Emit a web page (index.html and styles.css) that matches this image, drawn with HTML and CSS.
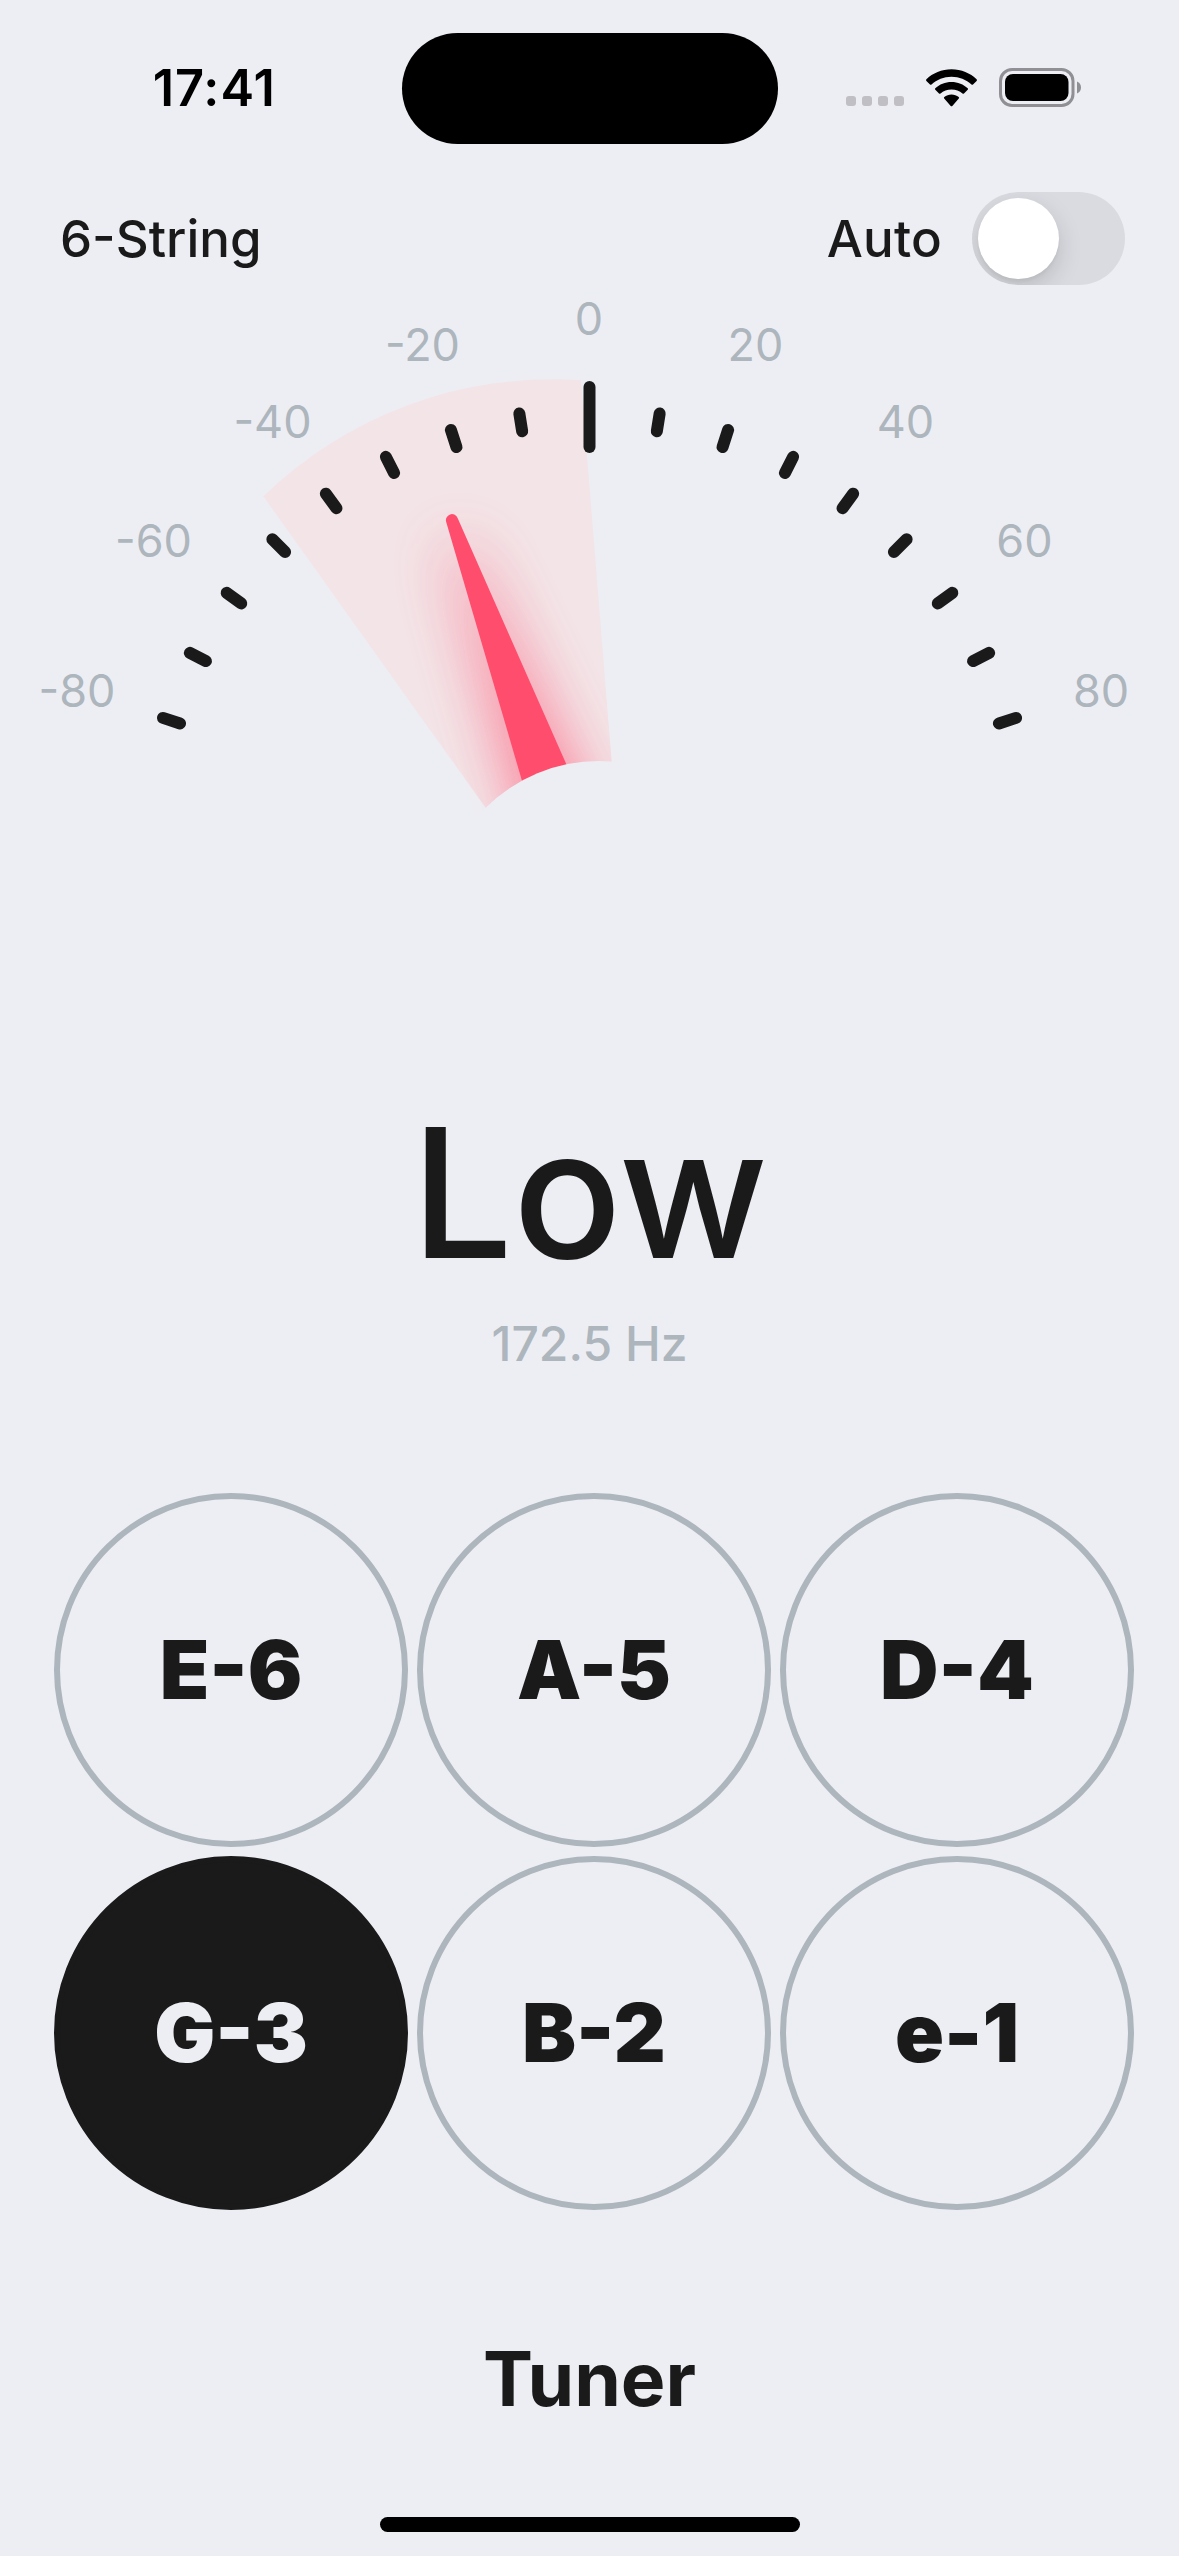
FILE: index.html
```html
<!DOCTYPE html>
<html lang="en">
<head>
<meta charset="utf-8">
<title>Tuner</title>
<link rel="stylesheet" href="styles.css">
</head>
<body>
<div class="screen">
  <header class="status">
    <div class="time">17:41</div>
    <div class="island"></div>
    <div class="indicators">
      <div class="signal"><i></i><i></i><i></i><i></i></div>
      <svg class="wifi" viewBox="0 0 51 38" width="51" height="38">
        <path d="M25.5 0.2C35.3 0.2 44.3 4 50.6 10.3Q51.3 11.1 50.6 11.9L47 15.5Q46.3 16.2 45.5 15.5C40.2 10.7 33.2 7.8 25.5 7.8S10.8 10.7 5.5 15.5Q4.7 16.2 4 15.5L.4 11.9Q-.3 11.1 .4 10.3C6.7 4 15.7 .2 25.5 .2Z"/>
        <path d="M25.5 12.9C31.8 12.9 37.5 15.3 41.7 19.2Q42.4 20 41.7 20.7L38 24.4Q37.3 25.1 36.5 24.4C33.6 21.9 29.7 20.4 25.5 20.4S17.4 21.9 14.5 24.4Q13.7 25.1 13 24.4L9.3 20.7Q8.6 20 9.3 19.2C13.5 15.3 19.2 12.9 25.5 12.9Z"/>
        <path d="M25.5 25.6C28.2 25.6 30.7 26.5 32.7 28.1Q33.5 28.9 32.8 29.6L26.3 36.9Q25.5 37.6 24.7 36.9L18.2 29.6Q17.5 28.9 18.3 28.1C20.3 26.5 22.8 25.6 25.5 25.6Z"/>
      </svg>
      <svg class="battery" viewBox="0 0 83 40" width="83" height="40">
        <rect x="1.5" y="1.5" width="72.5" height="36" rx="11.5" fill="none" stroke="#8f8f94" stroke-width="3"/>
        <rect x="6" y="6" width="63.5" height="27" rx="8"/>
        <path d="M78 13.5C80.5 14.5 82 16.8 82 19.5S80.5 24.500 78 25.500Z" fill="#8f8f94"/>
      </svg>
    </div>
  </header>

  <div class="toolbar">
    <div class="tuning">6-String</div>
    <div class="auto">
      <span>Auto</span>
      <div class="switch"><div class="knob"></div></div>
    </div>
  </div>

  <svg class="gauge" viewBox="0 285 1179 715" width="1179" height="715">
    <defs>
      <filter id="glow" filterUnits="userSpaceOnUse" x="270" y="360" width="520" height="700">
        <feGaussianBlur stdDeviation="30"/>
      </filter>
      <clipPath id="sector">
        <path d="M263.300 496.300A415 415 0 0 1 581 380.300L611.800 762L640 1124L486 807.700Z"/>
      </clipPath>
    </defs>
    <path class="wedge" d="M263.300 496.300A415 415 0 0 1 581 380.300L617.500 834L504 834Z"/>
    <path class="haze" filter="url(#glow)" d="M452 552A6 6 0 0 1 464 548L646 930H560Z"/>
    <g clip-path="url(#sector)">
      <path class="glow" filter="url(#glow)" d="M452 552A6 6 0 0 1 464 548L646 930H560Z"/>
    </g>
    <path class="needle" d="M446.200 522A6 6 0 0 1 457.700 518.300L595.400 830H536.400Z"/>
    <circle class="hub" cx="599" cy="922" r="161"/>

    <g class="ticks">
      <path d="M589.500 387V447"/>
      <path d="M589.500 408V426" transform="rotate(-72 589.500 856.500)"/>
      <path d="M589.500 408V426" transform="rotate(-63 589.500 856.500)"/>
      <path d="M589.500 408V426" transform="rotate(-54 589.500 856.500)"/>
      <path d="M589.500 408V426" transform="rotate(-45 589.500 856.500)"/>
      <path d="M589.500 408V426" transform="rotate(-36 589.500 856.500)"/>
      <path d="M589.500 408V426" transform="rotate(-27 589.500 856.500)"/>
      <path d="M589.500 408V426" transform="rotate(-18 589.500 856.500)"/>
      <path d="M589.500 408V426" transform="rotate(-9 589.500 856.500)"/>
      <path d="M589.500 408V426" transform="rotate(9 589.500 856.500)"/>
      <path d="M589.500 408V426" transform="rotate(18 589.500 856.500)"/>
      <path d="M589.500 408V426" transform="rotate(27 589.500 856.500)"/>
      <path d="M589.500 408V426" transform="rotate(36 589.500 856.500)"/>
      <path d="M589.500 408V426" transform="rotate(45 589.500 856.500)"/>
      <path d="M589.500 408V426" transform="rotate(54 589.500 856.500)"/>
      <path d="M589.500 408V426" transform="rotate(63 589.500 856.500)"/>
      <path d="M589.500 408V426" transform="rotate(72 589.500 856.500)"/>
    </g>
    <g class="labels">
      <text x="77" y="707">-80</text>
      <text x="153.500" y="556.500">-60</text>
      <text x="272.500" y="437.500">-40</text>
      <text x="422.500" y="361">-20</text>
      <text x="589" y="335">0</text>
      <text x="755.500" y="361">20</text>
      <text x="905.500" y="437.500">40</text>
      <text x="1024.500" y="556.500">60</text>
      <text x="1101" y="707">80</text>
    </g>
  </svg>

  <div class="reading">
    <div class="state">Low</div>
    <div class="freq">172.5 Hz</div>
  </div>

  <div class="strings">
    <div class="string">E-6</div>
    <div class="string">A-5</div>
    <div class="string">D-4</div>
    <div class="string active">G-3</div>
    <div class="string">B-2</div>
    <div class="string">e-1</div>
  </div>

  <div class="title">Tuner</div>
  <div class="home"></div>
</div>
</body>
</html>
```
FILE: styles.css
```css
* { box-sizing: border-box; }
body { margin: 0; background: #edeef3; }
.screen {
  width: 1179px;
  height: 2556px;
  display: flex;
  flex-direction: column;
  overflow: hidden;
  background: #edeef3;
  color: #1a1a1a;
  font-family: Inter, "Liberation Sans", sans-serif;
}
.status {
  height: 177px;
  flex: none;
  display: grid;
  grid-template-columns: 401.5px 376px 401.5px;
  align-items: center;
  color: #000;
}
.time {
  padding-left: 27px;
  margin-top: -1px;
  text-align: center;
  font-size: 50.5px;
  line-height: 60px;
  font-weight: 600;
  letter-spacing: 1px;
}
.island { height: 111px; border-radius: 56px; background: #000; margin-top: .5px; }
.indicators { display: flex; align-items: center; padding-left: 68.500px; }
.signal { display: flex; gap: 6px; margin-top: 25px; }
.signal i { width: 10px; height: 10px; border-radius: 3px; background: #c0bfc4; }
.wifi { margin-left: 21.500px; margin-top: -2px; }
.battery { margin-left: 22px; margin-top: -1px; }
.toolbar {
  height: 123px;
  flex: none;
  display: flex;
  align-items: center;
  justify-content: space-between;
  padding: 0 54px 0 60px;
  font-size: 51px;
  line-height: 62px;
  font-weight: 500;
}
.auto { display: flex; align-items: center; gap: 30px; }
.auto span { letter-spacing: .2px; }
.switch {
  width: 153px;
  height: 93px;
  border-radius: 47px;
  padding: 6px;
  background: #dadbe0;
  overflow: hidden;
}
.knob {
  width: 81px;
  height: 81px;
  border-radius: 50%;
  background: #fff;
  box-shadow: 0 9px 24px rgba(0, 0, 0, .15), 0 3px 3px rgba(0, 0, 0, .04);
}
.gauge { flex: none; display: block; margin-top: -15px; }
.wedge { fill: #f3e4e7; }
.haze { fill: #ff4d6d; opacity: .1; }
.glow { fill: #ff4d6d; opacity: .72; }
.needle { fill: #ff4d6d; }
.hub { fill: #edeef3; }
.ticks path { stroke: #1a1a1a; stroke-width: 12px; stroke-linecap: round; }
.labels text {
  fill: #adb5bd;
  font-size: 45px;
  font-weight: 400;
  text-anchor: middle;
}
.reading { margin-top: 102.500px; text-align: center; font-weight: 500; }
.state { font-size: 180px; line-height: 180px; }
.freq { margin-top: 31px; font-size: 48px; line-height: 60px; color: #adb5bd; }
.strings {
  margin: 119.500px 0 0 54px;
  display: grid;
  grid-template-columns: repeat(3, 354px);
  grid-auto-rows: 354px;
  gap: 9px;
}
.string {
  display: flex;
  align-items: center;
  justify-content: center;
  border: 6px solid #adb5bd;
  border-radius: 50%;
  font-size: 81px;
  line-height: 98px;
  font-weight: 900;
}
.string.active { background: #1a1a1a; border-color: #1a1a1a; color: #edeef3; }
.title {
  margin-top: 124px;
  text-align: center;
  font-size: 75px;
  line-height: 90px;
  font-weight: 700;
}
.home {
  width: 420px;
  height: 15px;
  margin: 93px auto 0;
  border-radius: 8px;
  background: #000;
}
```
